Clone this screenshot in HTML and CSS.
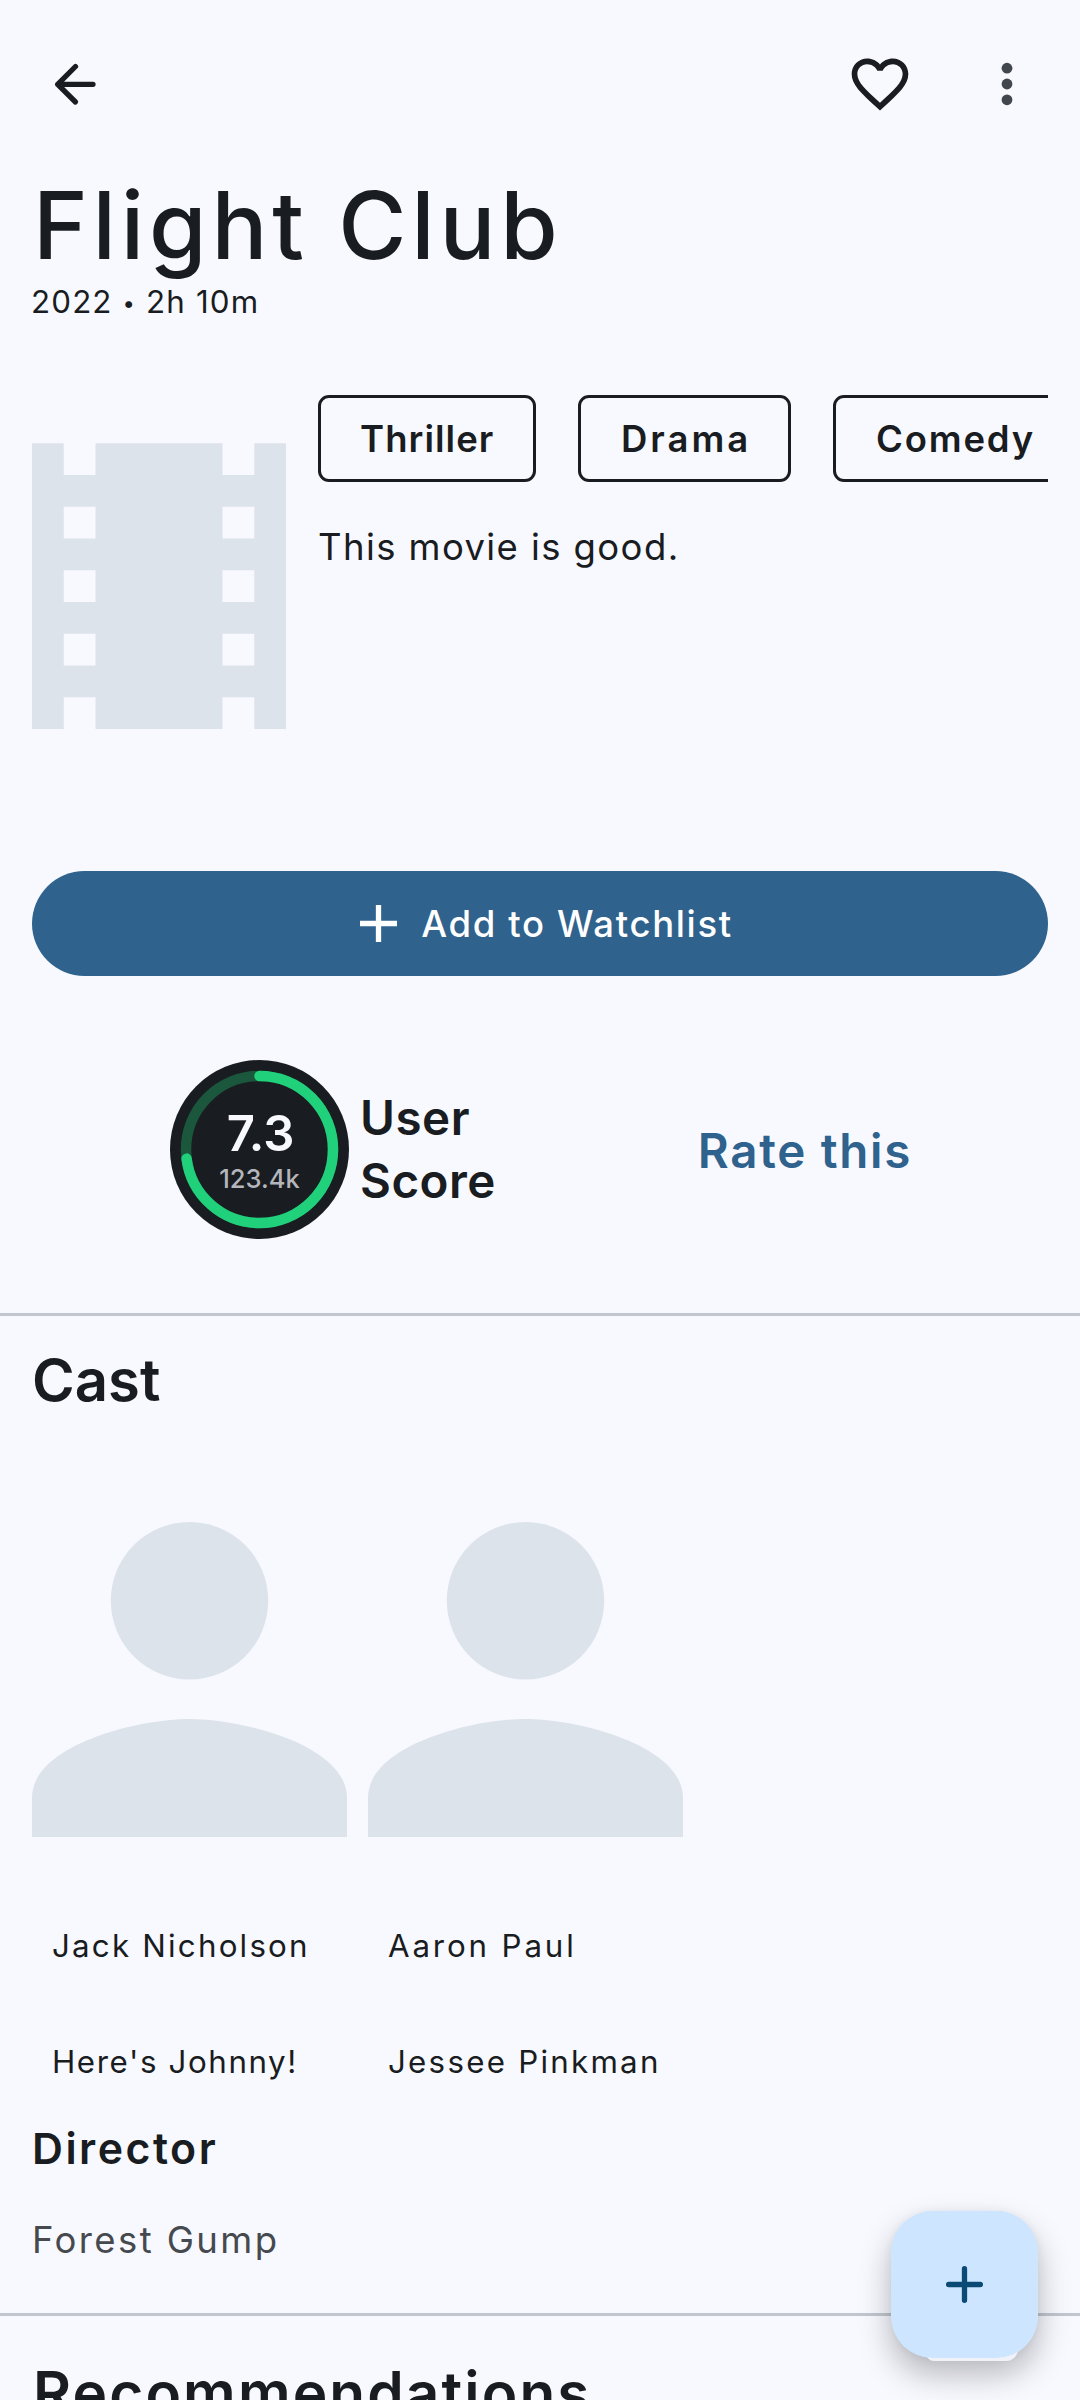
FILE: index.html
```
<!DOCTYPE html>
<html lang="en">
<head>
<meta charset="utf-8">
<title>Flight Club</title>
<link rel="stylesheet" href="styles.css">
</head>
<body>
<header class="topbar">
  <svg class="back" viewBox="0 0 48 48" fill="none" stroke="currentColor" stroke-width="5.3" stroke-linecap="round" stroke-linejoin="round"><path d="M6.7 24.3H42M24.5 6.5L6.7 24.3L24.5 42"/></svg>
  <div class="actions">
    <svg class="heart" viewBox="0 0 24 24" fill="currentColor"><path d="M16.5 3c-1.74 0-3.41.81-4.5 2.09C10.91 3.81 9.24 3 7.5 3 4.42 3 2 5.42 2 8.5c0 3.78 3.4 6.86 8.55 11.54L12 21.35l1.45-1.32C18.6 15.36 22 12.28 22 8.5 22 5.42 19.58 3 16.5 3zm-4.4 15.55l-.1.1-.1-.1C7.14 14.24 4 11.39 4 8.5 4 6.5 5.5 5 7.5 5c1.54 0 3.04.99 3.57 2.36h1.87C13.46 5.99 14.96 5 16.5 5c2 0 3.5 1.5 3.5 3.5 0 2.89-3.14 5.74-7.9 10.05z"/></svg>
    <svg class="more" viewBox="0 0 12 44" fill="currentColor"><circle cx="6" cy="6.2" r="5.4"/><circle cx="6" cy="22" r="5.4"/><circle cx="6" cy="37.8" r="5.4"/></svg>
  </div>
</header>
<main>
  <h1 class="title">Flight Club</h1>
  <p class="subtitle">2022 <span class="dot">•</span> 2h 10m</p>
  <section class="hero">
    <div class="poster">
      <svg viewBox="0 0 8 9"><path fill-rule="evenodd" d="M0 0h1v1h1V0h4v1h1V0h1v9H7V8H6v1H2V8H1v1H0zM1 2v1h1V2zM1 4v1h1V4zM1 6v1h1V6zM6 2v1h1V2zM6 4v1h1V4zM6 6v1h1V6z"/></svg>
    </div>
    <div class="info">
      <div class="chips">
        <span class="chip thriller">Thriller</span>
        <span class="chip drama">Drama</span>
        <span class="chip comedy">Comedy</span>
      </div>
      <p class="overview">This movie is good.</p>
    </div>
  </section>
  <button class="watchlist">
    <svg viewBox="0 0 37 37" fill="none" stroke="currentColor" stroke-width="5.3"><path d="M18.5 0v37M0 18.5h37"/></svg>
    <span>Add to Watchlist</span>
  </button>
  <section class="scores">
    <div class="score">
      <div class="gauge">
        <svg class="ring" viewBox="0 0 179 179" fill="none" stroke="#21d07a" stroke-width="10.5">
          <circle cx="89.5" cy="89.5" r="73.5" stroke-opacity=".33"/>
          <circle cx="89.5" cy="89.5" r="73.5" stroke-linecap="round" pathLength="100" stroke-dasharray="73 100" transform="rotate(-90 89.5 89.5)"/>
        </svg>
        <span class="value">7.3</span>
        <span class="votes">123.4k</span>
      </div>
      <p class="score-label">User<br>Score</p>
    </div>
    <a class="rate">Rate this</a>
  </section>
  <section class="cast">
    <h2 class="cast-heading">Cast</h2>
    <div class="people">
      <article class="person">
        <div class="portrait"><svg viewBox="4 4 16 16"><path d="M12 12a4 4 0 1 0 0-8 4 4 0 0 0 0 8zM12 14c-2.67 0-8 1.34-8 4v2h16v-2c0-2.66-5.33-4-8-4z"/></svg></div>
        <p class="name">Jack Nicholson</p>
        <p class="role quote">Here's Johnny!</p>
      </article>
      <article class="person">
        <div class="portrait"><svg viewBox="4 4 16 16"><path d="M12 12a4 4 0 1 0 0-8 4 4 0 0 0 0 8zM12 14c-2.67 0-8 1.34-8 4v2h16v-2c0-2.66-5.33-4-8-4z"/></svg></div>
        <p class="name short">Aaron Paul</p>
        <p class="role">Jessee Pinkman</p>
      </article>
    </div>
    <h3 class="director">Director</h3>
    <p class="director-name">Forest Gump</p>
  </section>
  <section class="recommendations">
    <h2>Recommendations</h2>
  </section>
</main>
<button class="fab" aria-label="Add">
  <svg viewBox="0 0 37 37" fill="none" stroke="currentColor" stroke-width="5.3" stroke-linecap="round"><path d="M18.5 2.65v31.7M2.65 18.5h31.7"/></svg>
</button>
</body>
</html>
```
FILE: styles.css
```
* { box-sizing: border-box; margin: 0; padding: 0; }
body {
  position: relative;
  width: 1080px;
  height: 2400px;
  overflow: hidden;
  background: #f8f9ff;
  color: #191c20;
  font-family: Inter, "Open Sans", sans-serif;
  font-weight: 500;
  white-space: nowrap;
}
svg { display: block; flex: none; }
button { border: 0; font: inherit; }

.topbar {
  display: flex;
  justify-content: space-between;
  align-items: center;
  height: 168px;
  padding: 0 67px 0 51px;
}
.back { width: 48px; height: 48px; }
.actions { display: flex; align-items: center; gap: 87px; }
.heart { width: 68px; height: 68px; }
.more { width: 12px; height: 44px; color: #42474e; }

.title {
  padding-left: 33px;
  font-size: 93px;
  font-weight: 500;
  line-height: 115px;
  letter-spacing: 4.8px;
}
.subtitle {
  height: 36px;
  margin-top: 1px;
  padding-left: 31px;
  font-size: 31.3px;
  font-weight: 400;
  line-height: 36px;
  letter-spacing: 1.15px;
}
.dot { font-size: 22px; line-height: 1; vertical-align: 2px; }

.hero { display: flex; gap: 32px; margin: 75px 32px 0; height: 381px; }
.poster { display: flex; align-items: center; width: 254px; fill: #dde3eb; }
.poster svg { width: 254px; height: 286px; }
.info { flex: 1; min-width: 0; overflow: hidden; }
.chips { display: flex; gap: 42px; }
.chip {
  flex: none;
  height: 87px;
  padding-left: 39px;
  border: 3px solid #191c20;
  border-radius: 11px;
  font-size: 36.5px;
  font-weight: 600;
  line-height: 82px;
}
.thriller { width: 218px; letter-spacing: 1.04px; }
.drama { width: 213px; padding-left: 40px; letter-spacing: 3px; }
.comedy { width: 242px; padding-left: 40px; letter-spacing: 1.8px; }
.overview {
  margin-top: 45px;
  font-size: 36.5px;
  font-weight: 400;
  line-height: 40px;
  letter-spacing: 1.4px;
}

.watchlist {
  display: flex;
  align-items: center;
  justify-content: center;
  gap: 24px;
  width: 1016px;
  height: 105px;
  margin: 95px 32px 0;
  padding-left: 13px;
  border-radius: 53px;
  background: #2f628c;
  color: #fff;
  font-size: 36.5px;
  letter-spacing: 1.65px;
}
.watchlist svg { width: 37px; height: 37px; }

.scores {
  display: flex;
  justify-content: space-between;
  height: 340px;
  padding: 84px 168px 0 170px;
  border-bottom: 3px solid #c2c7cf;
}
.score { display: flex; gap: 11px; }
.gauge {
  position: relative;
  width: 179px;
  height: 179px;
  padding-top: 48px;
  border-radius: 50%;
  background: #191c20;
  text-align: center;
}
.ring { position: absolute; inset: 0; width: 179px; height: 179px; }
.value {
  display: block;
  padding-left: 2px;
  color: #f8f9ff;
  font-size: 49px;
  font-weight: 600;
  line-height: 52px;
}
.votes {
  display: block;
  margin-top: 5px;
  color: #b4b6bc;
  font-size: 25.5px;
  line-height: 28px;
}
.score-label {
  padding-top: 26px;
  font-size: 47.5px;
  font-weight: 600;
  line-height: 63px;
  letter-spacing: .5px;
}
.rate {
  color: #2f628c;
  font-size: 47.5px;
  font-weight: 600;
  line-height: 182px;
  letter-spacing: 1.7px;
}

.cast { padding-top: 29px; border-bottom: 3px solid #c2c7cf; height: 1000px; }
.cast-heading { padding-left: 32px; font-size: 58px; font-weight: 600; line-height: 70px; letter-spacing: 0; }
.people { display: flex; gap: 21px; margin: 28px 32px 0; }
.person { width: 315px; font-size: 31.3px; font-weight: 400; line-height: 42px; }
.portrait { display: flex; align-items: center; height: 472px; fill: #dde3eb; }
.portrait svg { width: 315px; height: 315px; }
.name { margin: 10px 0 0 20px; letter-spacing: 2.2px; }
.name.short { letter-spacing: 2.85px; }
.role { margin: 74px 0 0 20px; letter-spacing: 2.25px; }
.role.quote { letter-spacing: 1.6px; }
.director { margin: 38px 0 0 32px; font-size: 42.8px; font-weight: 600; line-height: 56px; letter-spacing: 2.5px; }
.director-name { margin: 38px 0 0 32px; color: #46494e; font-size: 36.5px; font-weight: 400; line-height: 50px; letter-spacing: 2.4px; }

.recommendations { padding: 42px 0 0 33px; }
.recommendations h2 { font-size: 58.5px; font-weight: 600; line-height: 70px; letter-spacing: 2.1px; }

.fab {
  position: absolute;
  z-index: 1;
  left: 891px;
  top: 2211px;
  display: flex;
  align-items: center;
  justify-content: center;
  width: 147px;
  height: 147px;
  border-radius: 42px;
  background: #cee5ff;
  color: #0a4a74;
  box-shadow: 0 16px 32px rgba(0, 0, 0, .27), 0 0 10px rgba(0, 0, 0, .05);
}
.fab::before {
  content: "";
  position: absolute;
  z-index: -2;
  left: 35px;
  bottom: -3px;
  width: 92px;
  height: 14px;
  border-radius: 0 0 12px 8px;
  background: #f1f2f8;
}
.fab::after {
  content: "";
  position: absolute;
  z-index: -1;
  inset: 0;
  border-radius: 42px;
  background: #cee5ff;
}
.fab svg { width: 37px; height: 37px; }
```
